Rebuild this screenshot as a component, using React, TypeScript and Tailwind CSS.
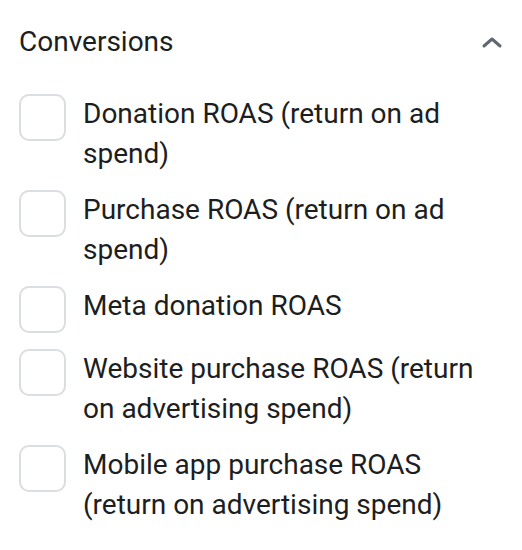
import React from "react";

const items = [
  "Donation ROAS (return on ad spend)",
  "Purchase ROAS (return on ad spend)",
  "Meta donation ROAS",
  "Website purchase ROAS (return on advertising spend)",
  "Mobile app purchase ROAS (return on advertising spend)",
];

export default function App() {
  return (
    <div className="w-[522px] h-[550px] bg-white text-[#1c1e21]" style={{ fontFamily: "Roboto, sans-serif" }}>
      <div className="pl-[19px] pr-[19px] pt-[24px]">
        <div className="flex items-center justify-between h-[36px]">
          <span className="text-[28px] leading-[36px]">Conversions</span>
          <svg width="22" height="14" viewBox="0 0 22 14" className="mr-[0px]">
            <path d="M3 11 L11 4 L19 11" fill="none" stroke="#606770" strokeWidth="3" strokeLinecap="round" strokeLinejoin="round" />
          </svg>
        </div>
        <div className="mt-[34px] flex flex-col gap-[16px]">
          {items.map((t) => (
            <div key={t} className="flex items-start gap-[17px]">
              <div className="w-[47px] h-[47px] shrink-0 rounded-[10px] border-2 border-[#dadde1] bg-white" />
              <span className="text-[28px] leading-[40px] flex-1">{t}</span>
            </div>
          ))}
        </div>
      </div>
    </div>
  );
}
